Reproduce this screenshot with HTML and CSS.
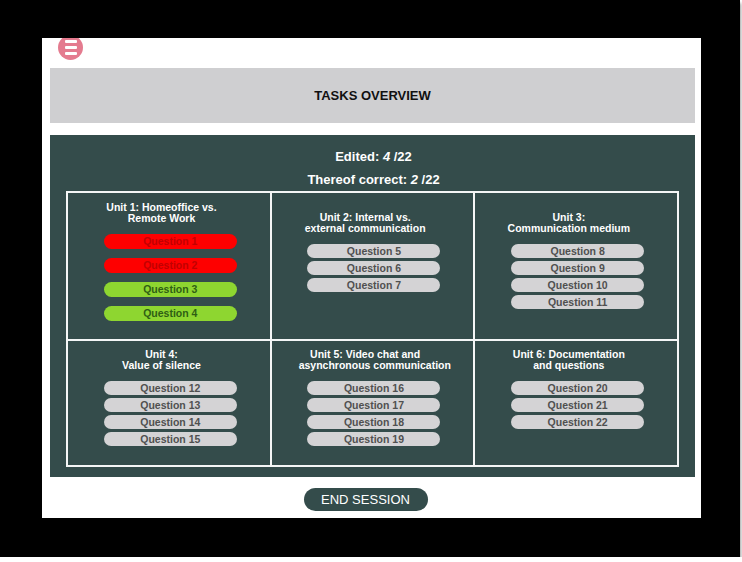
FILE: index.html
```html
<!DOCTYPE html>
<html lang="en">

<head>
    <meta charset="UTF-8">
    <meta name="viewport" content="width=device-width, initial-scale=1.0">
    <title>Tasks Overview</title>
    <link rel="stylesheet" href="styles.css">
</head>

<body>
    <div class="device-frame">
        <div class="screen">
            <div class="top-bar">
                <button class="menu-button" aria-label="Menu">
                    <span></span><span></span><span></span>
                </button>
            </div>

            <header class="page-header">
                <h1>TASKS OVERVIEW</h1>
            </header>

            <main class="overview-panel">
                <div class="stats">
                    <p>Edited: <em>4</em> /22</p>
                    <p>Thereof correct: <em>2</em> /22</p>
                </div>

                <div class="unit-grid">
                    <section class="unit unit-first">
                        <h2>Unit 1: Homeoffice vs.<br>Remote Work</h2>
                        <ul class="question-list spaced">
                            <li class="question wrong">Question 1</li>
                            <li class="question wrong">Question 2</li>
                            <li class="question correct">Question 3</li>
                            <li class="question correct">Question 4</li>
                        </ul>
                    </section>
                    <section class="unit unit-low">
                        <h2>Unit 2: Internal vs.<br>external communication</h2>
                        <ul class="question-list">
                            <li class="question">Question 5</li>
                            <li class="question">Question 6</li>
                            <li class="question">Question 7</li>
                        </ul>
                    </section>
                    <section class="unit unit-low">
                        <h2>Unit 3:<br>Communication medium</h2>
                        <ul class="question-list">
                            <li class="question">Question 8</li>
                            <li class="question">Question 9</li>
                            <li class="question">Question 10</li>
                            <li class="question">Question 11</li>
                        </ul>
                    </section>
                    <section class="unit">
                        <h2>Unit 4:<br>Value of silence</h2>
                        <ul class="question-list">
                            <li class="question">Question 12</li>
                            <li class="question">Question 13</li>
                            <li class="question">Question 14</li>
                            <li class="question">Question 15</li>
                        </ul>
                    </section>
                    <section class="unit">
                        <h2>Unit 5: Video chat and<br>asynchronous communication</h2>
                        <ul class="question-list">
                            <li class="question">Question 16</li>
                            <li class="question">Question 17</li>
                            <li class="question">Question 18</li>
                            <li class="question">Question 19</li>
                        </ul>
                    </section>
                    <section class="unit">
                        <h2>Unit 6: Documentation<br>and questions</h2>
                        <ul class="question-list">
                            <li class="question">Question 20</li>
                            <li class="question">Question 21</li>
                            <li class="question">Question 22</li>
                        </ul>
                    </section>
                </div>
            </main>

            <div class="session-actions">
                <button class="end-session">END SESSION</button>
            </div>
        </div>
    </div>
</body>

</html>
```

FILE: styles.css
```css
:root {
    --panel-color: #344c4b;
    --header-color: #cfcfd1;
    --pill-color: #d4d3d5;
}

body {
    font-family: "Liberation Sans", Arial, sans-serif;
    background-color: #ffffff;
    margin: 0;
    padding: 0;
}

.device-frame {
    width: 740px;
    height: 557px;
    box-sizing: border-box;
    padding: 38px 39px 39px 42px;
    background-color: #000;
    box-shadow: 1px 3px 3px #9a9a9a;
}

.screen {
    height: 480px;
    background-color: #fff;
    overflow: hidden;
    padding: 0 6px 0 8px;
}

.top-bar {
    display: flex;
    align-items: flex-start;
    height: 30px;
}

.menu-button {
    display: flex;
    flex-direction: column;
    align-items: center;
    justify-content: center;
    gap: 3px;
    width: 25px;
    height: 25px;
    margin: -3px 0 0 8px;
    padding: 0;
    border: none;
    border-radius: 50%;
    background-color: #e47b8f;
}

.menu-button span {
    display: block;
    width: 12px;
    height: 3px;
    border-radius: 1px;
    background-color: #fff;
}

.page-header {
    height: 55px;
    display: flex;
    align-items: center;
    justify-content: center;
    background-color: var(--header-color);
}

.page-header h1 {
    margin: 0;
    font-size: 13px;
    color: #111;
}

.overview-panel {
    margin-top: 12px;
    height: 342px;
    box-sizing: border-box;
    padding: 10px 16px 10px;
    background-color: var(--panel-color);
}

.stats {
    text-align: center;
    color: #fff;
    font-weight: bold;
    font-size: 13px;
    margin-left: 2px;
}

.stats p {
    margin: 0;
    line-height: 23px;
}

.unit-grid {
    height: 276px;
    box-sizing: border-box;
    display: grid;
    grid-template-columns: repeat(3, 1fr);
    grid-template-rows: 146px 1fr;
    gap: 2px;
    padding: 2px;
    background-color: #f4f6f6;
}

.unit {
    background-color: var(--panel-color);
    padding-top: 8px;
}

.unit-first {
    padding-top: 9px;
}

.unit-low {
    padding-top: 19px;
}

/* title box is as wide as the pills, set a bit to the left of them */
.unit h2 {
    width: 133px;
    margin: 0 0 10px 27px;
    font-size: 10.5px;
    line-height: 11px;
    text-align: center;
    white-space: nowrap;
    color: #fff;
}

.question-list {
    list-style-type: none;
    margin: 0;
    padding: 0;
    display: flex;
    flex-direction: column;
    align-items: center;
    gap: 3px;
    margin-left: 3px;
}

.question-list.spaced {
    gap: 9px;
}

.question {
    width: 133px;
    height: 14px;
    line-height: 14px;
    border-radius: 8px;
    text-align: center;
    font-size: 10.5px;
    font-weight: bold;
    color: #505050;
    background-color: var(--pill-color);
}

.question-list.spaced .question {
    height: 15px;
    line-height: 15px;
}

.question.wrong {
    background-color: #fe0000;
    color: #c20000;
}

.question.correct {
    background-color: #8ed630;
    color: #2f5f14;
}

.session-actions {
    display: flex;
    justify-content: center;
    padding-top: 11px;
}

.end-session {
    width: 124px;
    height: 23px;
    margin-right: 14px;
    border: none;
    border-radius: 12px;
    background-color: var(--panel-color);
    color: #fff;
    font-family: "Liberation Sans", Arial, sans-serif;
    font-size: 13px;
}
```
